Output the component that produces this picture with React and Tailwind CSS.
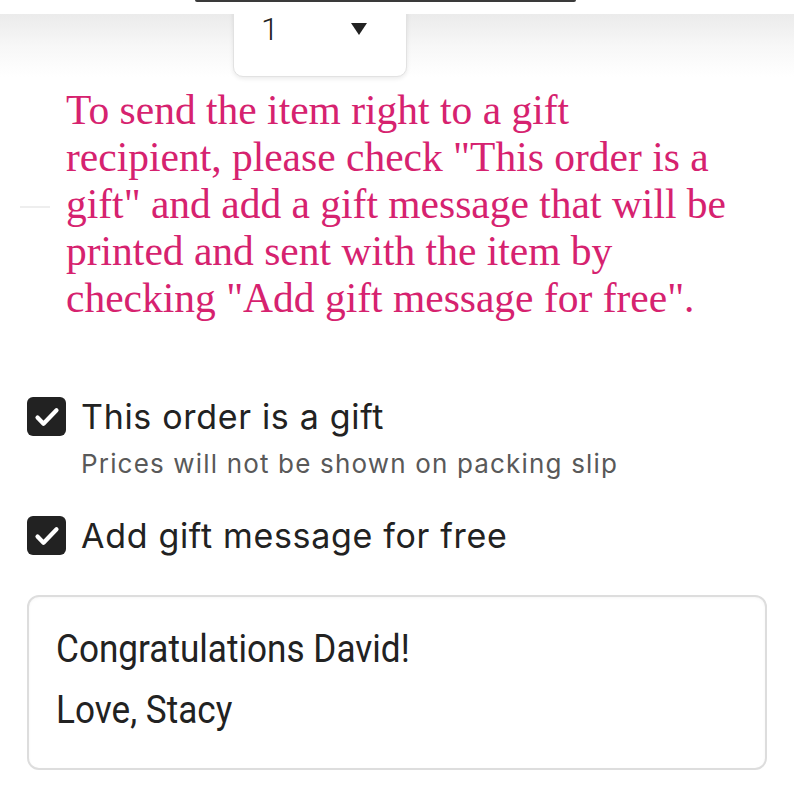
import React from 'react';

function Check() {
    return (
        <div className="w-[39px] h-[39px] shrink-0 rounded-[6px] bg-[#222222]">
            <svg width="39" height="39" viewBox="0 0 39 39" fill="none">
                <path d="M10.5 20.5 L16.5 26.8 L29.5 13.2" stroke="white" strokeWidth="4.2" strokeLinecap="round" strokeLinejoin="round" />
            </svg>
        </div>
    );
}

export default function App() {
    return (
        <div className="relative w-[794px] h-[791px] overflow-hidden bg-white">
            {/* header strip */}
            <div className="relative z-10 h-[14px] bg-white">
                <div className="ml-[195px] w-[381px] h-[2px] rounded-b-full bg-[#3a3a3a]" />
            </div>

            {/* quantity select on shaded band */}
            <div className="flex h-[63px] bg-gradient-to-b from-[#ebebeb] via-[#f7f7f7] to-white">
                <div className="-mt-[14px] ml-[233px] w-[174px] h-[77px] rounded-b-[10px] bg-white border border-[#e2e2e2] shadow-[0_2px_4px_rgba(0,0,0,0.08)] flex items-start pt-[8px]">
                    <span className="ml-[27px] text-[32px] leading-[40px] text-[#222] font-light" style={{ fontFamily: 'Roboto, sans-serif' }}>1</span>
                    <svg className="ml-[72px] mt-[14px]" width="16" height="12" viewBox="0 0 16 12">
                        <path d="M0 0 H16 L8 12 Z" fill="#222" />
                    </svg>
                </div>
            </div>

            <div className="absolute left-[20px] top-[206px] w-[30px] h-[2px] bg-[#eeeeee]" />

            {/* instructions */}
            <p
                className="mt-[10px] ml-[66px] text-[41.5px] leading-[47px] text-[#d6226f]"
                style={{ fontFamily: '"Liberation Serif", "Times New Roman", serif' }}
            >
                To send the item right to a gift<br />
                recipient, please check "This order is a<br />
                gift" and add a gift message that will be<br />
                printed and sent with the item by<br />
                checking "Add gift message for free".
            </p>

            {/* options */}
            <div className="ml-[27px] mt-[75px]" style={{ fontFamily: 'Inter, sans-serif' }}>
                <div className="flex items-center gap-[15px]">
                    <Check />
                    <span className="text-[34px] leading-[39px] tracking-[0.02em] text-[#222]">This order is a gift</span>
                </div>
                <div className="ml-[54px] mt-[12px] text-[26px] leading-[32px] tracking-[0.045em] text-[#595959]">
                    Prices will not be shown on packing slip
                </div>
                <div className="flex items-center gap-[15px] mt-[36px]">
                    <Check />
                    <span className="text-[34px] leading-[39px] tracking-[0.02em] text-[#222]">Add gift message for free</span>
                </div>
            </div>

            {/* message box */}
            <div
                className="mt-[40px] ml-[27px] w-[740px] h-[175px] rounded-[12px] border-2 border-[#dddddd] bg-white shadow-[inset_0_1px_3px_rgba(0,0,0,0.04)] px-[27px] pt-[22px] text-[38px] leading-[61px] text-[#222]"
                style={{ fontFamily: 'Roboto, sans-serif' }}
            >
                <div className="origin-left scale-x-[0.925]">Congratulations David!</div>
                <div className="origin-left scale-x-[0.925]">Love, Stacy</div>
            </div>
        </div>
    );
}
